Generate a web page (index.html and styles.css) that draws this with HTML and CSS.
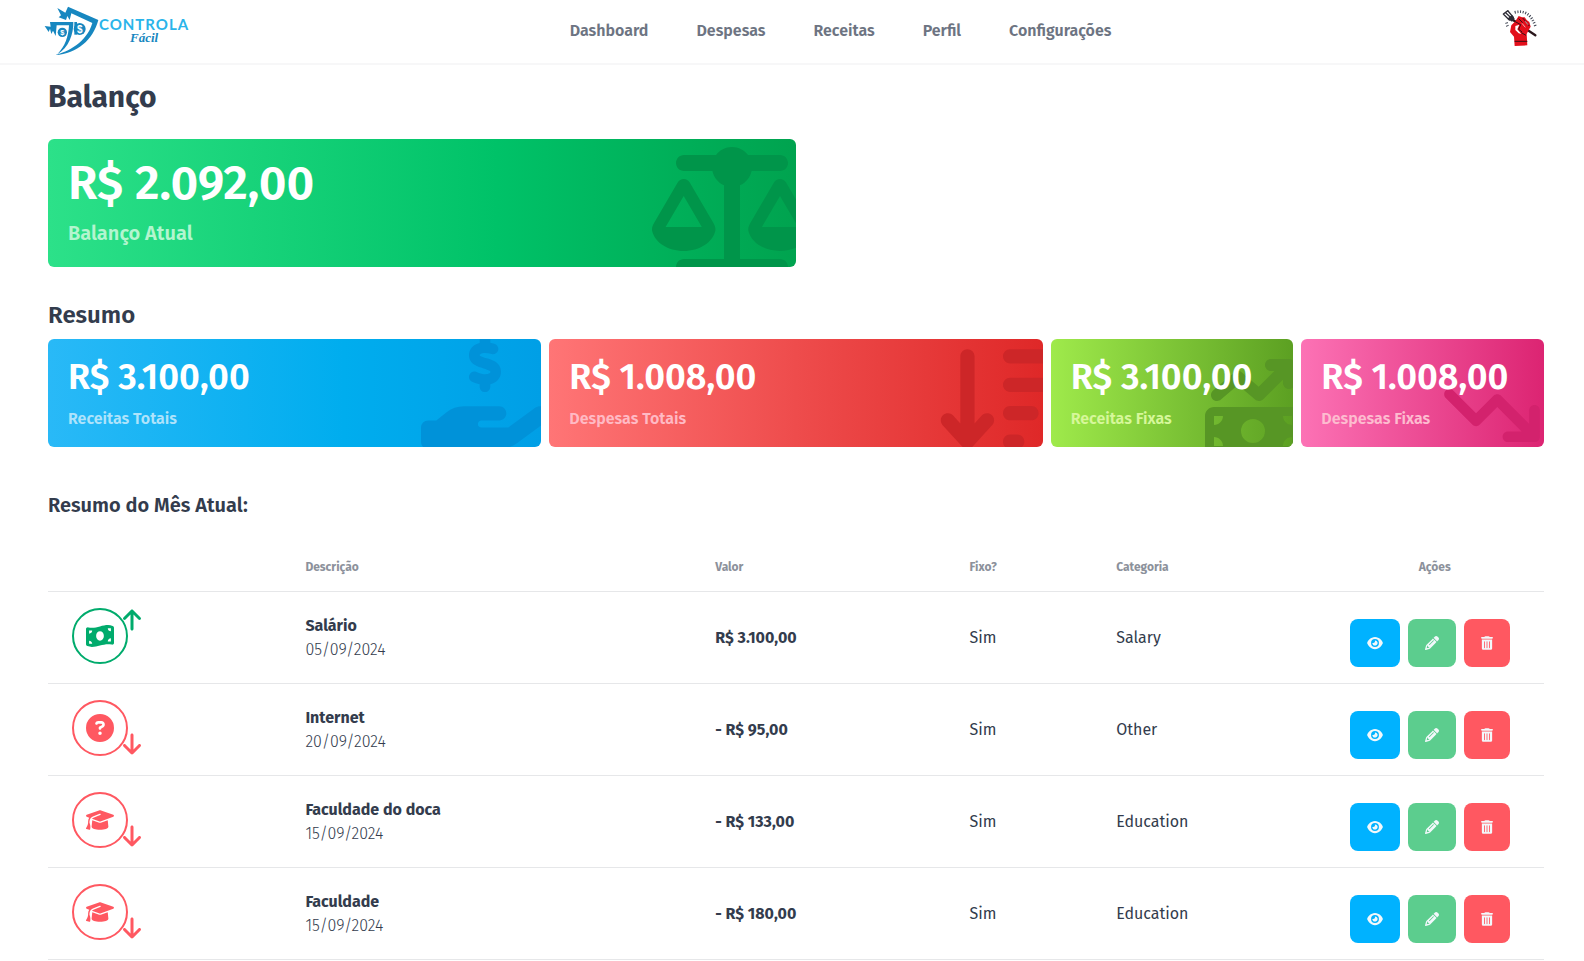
FILE: index.html
```html
<!DOCTYPE html>
<html lang="pt-BR">
<head>
<meta charset="utf-8">
<meta name="viewport" content="width=device-width, initial-scale=1">
<title>Controla Fácil</title>
<link rel="stylesheet" href="styles.css">
</head>
<body>
<svg class="sprite" aria-hidden="true">
  <symbol id="i-bill" viewBox="0 0 576 512"><path d="M0 112.5V422.3c0 18 10.1 35 27 41.3c87 32.5 174 10.3 261-11.9c79.8-20.3 159.6-40.7 239.3-18.9c23 6.3 48.7-9.5 48.7-33.4V89.7c0-18-10.1-35-27-41.3C462 15.9 375 38.1 288 60.3C208.2 80.6 128.4 100.9 48.7 79.1C25.6 72.8 0 88.6 0 112.5zM288 352c-44.2 0-80-43-80-96s35.8-96 80-96s80 43 80 96s-35.8 96-80 96zM64 352c35.3 0 64 28.7 64 64H64V352zm64-208c0 35.3-28.7 64-64 64V144h64zM512 304v64H448c0-35.3 28.7-64 64-64zM448 96h64v64c-35.3 0-64-28.7-64-64z"/></symbol>
  <symbol id="i-question" viewBox="0 0 512 512"><path d="M256 512A256 256 0 1 0 256 0a256 256 0 1 0 0 512zM169.8 165.3c7.9-22.3 29.1-37.3 52.8-37.3h58.3c34.9 0 63.1 28.3 63.1 63.1c0 22.6-12.1 43.5-31.7 54.8L280 264.4c-.2 13-10.9 23.6-24 23.6c-13.3 0-24-10.7-24-24V250.5c0-8.6 4.6-16.5 12.1-20.8l44.3-25.4c4.7-2.7 7.6-7.7 7.6-13.1c0-8.4-6.8-15.1-15.1-15.1H222.6c-3.4 0-6.4 2.1-7.5 5.3l-.4 1.2c-4.4 12.5-18.2 19-30.6 14.6s-19-18.2-14.6-30.6l.4-1.2zM224 352a32 32 0 1 1 64 0 32 32 0 1 1 -64 0z"/></symbol>
  <symbol id="i-cap" viewBox="0 0 640 512"><path d="M320 32c-8.1 0-16.1 1.4-23.7 4.1L15.8 137.4C6.3 140.9 0 149.9 0 160s6.3 19.1 15.8 22.6l57.9 20.9C57.3 229.3 48 259.8 48 291.9v28.1c0 28.4-10.8 57.7-22.3 80.8c-6.5 13-13.9 25.8-22.5 37.6C0 442.7-.9 448.3 .9 453.4s6 8.9 11.2 10.2l64 16c4.2 1.1 8.7 .3 12.4-2s6.3-6.1 7.1-10.4c8.6-42.8 4.3-81.2-2.1-108.7C90.3 344.3 86 329.8 80 316.5V291.9c0-30.2 10.2-58.7 27.9-81.5c12.9-15.5 29.6-28 49.2-35.7l157-61.7c8.2-3.2 17.5 .8 20.7 9s-.8 17.5-9 20.7l-157 61.7c-12.4 4.9-23.3 12.4-32.2 21.6l159.6 57.6c7.6 2.7 15.6 4.1 23.7 4.1s16.1-1.4 23.7-4.1L624.2 182.6c9.5-3.4 15.8-12.5 15.8-22.6s-6.3-19.1-15.8-22.6L343.7 36.1C336.1 33.4 328.1 32 320 32zM128 408c0 35.3 86 72 192 72s192-36.7 192-72L496.7 262.6 354.5 314c-11.1 4-22.8 6-34.5 6s-23.5-2-34.5-6L143.3 262.6 128 408z"/></symbol>
  <symbol id="i-up" viewBox="0 0 384 512"><path d="M214.6 41.4c-12.5-12.5-32.8-12.5-45.3 0l-160 160c-12.5 12.5-12.5 32.8 0 45.3s32.8 12.5 45.3 0L160 141.2V448c0 17.7 14.3 32 32 32s32-14.3 32-32V141.2L329.4 246.6c12.5 12.5 32.8 12.5 45.3 0s12.5-32.8 0-45.3l-160-160z"/></symbol>
  <symbol id="i-down" viewBox="0 0 384 512"><path d="M169.4 470.6c12.5 12.5 32.8 12.5 45.3 0l160-160c12.5-12.5 12.5-32.8 0-45.3s-32.8-12.5-45.3 0L224 370.8V64c0-17.7-14.3-32-32-32s-32 14.3-32 32v306.7L54.6 265.4c-12.5-12.5-32.8-12.5-45.3 0s-12.5 32.8 0 45.3l160 160z"/></symbol>
  <symbol id="i-eye" viewBox="0 0 576 512"><path d="M288 32c-80.8 0-145.5 36.8-192.6 80.6C48.6 156 17.3 208 2.5 243.7c-3.3 7.9-3.3 16.7 0 24.6C17.3 304 48.6 356 95.4 399.4C142.5 443.2 207.2 480 288 480s145.5-36.8 192.6-80.6c46.8-43.5 78.1-95.4 93-131.1c3.3-7.9 3.3-16.7 0-24.6c-14.9-35.7-46.2-87.7-93-131.1C433.5 68.8 368.8 32 288 32zM144 256a144 144 0 1 1 288 0 144 144 0 1 1 -288 0zm144-64c0 35.3-28.7 64-64 64c-7.1 0-13.9-1.2-20.3-3.3c-5.5-1.8-11.9 1.6-11.7 7.4c.3 6.9 1.3 13.8 3.2 20.7c13.7 51.2 66.4 81.6 117.6 67.9s81.6-66.4 67.9-117.6c-11.1-41.5-47.8-69.4-88.6-71.1c-5.8-.2-9.2 6.1-7.4 11.7c2.1 6.4 3.3 13.2 3.3 20.3z"/></symbol>
  <symbol id="i-pencil" viewBox="0 0 512 512"><path d="M410.3 231l11.3-11.3-33.9-33.9-62.1-62.1L291.7 89.8l-11.3 11.3-22.6 22.6L58.6 322.9c-10.4 10.4-18 23.3-22.2 37.4L1 480.7c-2.5 8.4-.2 17.5 6.1 23.7s15.3 8.5 23.7 6.1l120.3-35.4c14.1-4.2 27-11.8 37.4-22.2L387.7 253.7 410.3 231zM160 399.4l-9.1 22.7c-4 3.1-8.5 5.4-13.3 6.9L59.4 452l23-78.1c1.4-4.9 3.8-9.4 6.9-13.3l22.7-9.1v32c0 8.8 7.2 16 16 16h32zM362.7 18.7L348.3 33.2 325.7 55.8 314.3 67.1l33.9 33.9 62.1 62.1 33.9 33.9 11.3-11.3 22.6-22.6 14.5-14.5c25-25 25-65.5 0-90.5L453.3 18.7c-25-25-65.5-25-90.5 0zm-47.4 168l-144 144c-6.2 6.2-16.4 6.2-22.6 0s-6.2-16.4 0-22.6l144-144c6.2-6.2 16.4-6.2 22.6 0s6.2 16.4 0 22.6z"/></symbol>
  <symbol id="i-trash" viewBox="0 0 448 512"><path d="M135.2 17.7C140.6 6.8 151.7 0 163.8 0H284.2c12.1 0 23.2 6.8 28.6 17.7L320 32h96c17.7 0 32 14.3 32 32s-14.3 32-32 32H32C14.3 96 0 81.7 0 64S14.3 32 32 32h96l7.2-14.3zM32 128H416V448c0 35.3-28.7 64-64 64H96c-35.3 0-64-28.7-64-64V128zm96 64c-8.8 0-16 7.2-16 16V432c0 8.8 7.2 16 16 16s16-7.2 16-16V208c0-8.8-7.2-16-16-16zm96 0c-8.8 0-16 7.2-16 16V432c0 8.8 7.2 16 16 16s16-7.2 16-16V208c0-8.8-7.2-16-16-16zm96 0c-8.8 0-16 7.2-16 16V432c0 8.8 7.2 16 16 16s16-7.2 16-16V208c0-8.8-7.2-16-16-16z"/></symbol>
</svg>

<header class="topbar">
  <a class="brand" href="#" aria-label="Controla Fácil">
    <svg class="brand-mark" viewBox="42 18 165 150" aria-hidden="true">
      <path fill="#1787c0" d="M114 20L205 60C190 118 142 162 76 165C112 156 170 128 187 69L124 40L119 60L112 48L108 60L86 52L93 46L82 24L106 38Z"/>
      <path fill="#1787c0" d="M60 66H130C131 102 116 144 82 163C106 138 115 110 117 76H80L77 108L69 92L64 102L60 86L56 96L44 78L62 80Z"/>
      <path fill="#1787c0" d="M133 66H141V104H133Z"/>
      <circle cx="97" cy="97" r="14" fill="#1787c0"/>
      <circle cx="149" cy="87" r="18" fill="#1787c0"/>
      <text x="97" y="105" class="coin coin-s">$</text>
      <text x="149" y="98" class="coin coin-l">$</text>
    </svg>
    <span class="brand-text"><span class="brand-top">CONTROLA</span><span class="brand-sub">Fácil</span></span>
  </a>
  <nav class="menu">
    <a href="#">Dashboard</a>
    <a href="#">Despesas</a>
    <a href="#">Receitas</a>
    <a href="#">Perfil</a>
    <a href="#">Configurações</a>
  </nav>
  <button class="avatar" type="button" aria-label="Conta">
    <svg viewBox="62 26 120 120" aria-hidden="true">
      <path d="M98 60L168 108" stroke="#2a171c" stroke-width="7" stroke-linecap="round"/>
      <path d="M72 44L86 34M74 46L90 62M79 40L98 58M86 35L102 54" stroke="#2d2c36" stroke-width="4" stroke-linecap="round" fill="none"/>
      <path d="M84 58L98 67L106 58L98 46" fill="#2d2c36"/>
      <path fill="#e30f1b" d="M106 140L104 112L92 98L96 78L108 66L118 50L128 54L136 54L142 62L150 68L154 82L148 92L142 104L144 138Z"/>
      <path fill="#fff" d="M108 80L120 76L114 90L126 104L118 102L108 92Z"/>
      <path d="M106 66L124 76L118 90L128 98M118 58L130 70M130 56L142 70M140 68L150 80M106 126H144M126 100L140 108" stroke="#3a1015" stroke-width="3" fill="none"/>
      <path d="M128 72L138 84M138 66L146 76" stroke="#fff" stroke-width="2"/>
      <path d="M106 39Q150 28 168 80" fill="none" stroke="#3d4250" stroke-width="8" stroke-dasharray="3 5"/>
      <path d="M78 72l8-2M80 81l8-3" stroke="#3d4250" stroke-width="3"/>
    </svg>
  </button>
</header>

<main class="page">
  <h1>Balanço</h1>
  <section class="balance">
    <article class="card card-green card-lg">
      <svg class="art art-scale" viewBox="0 0 640 512" aria-hidden="true"><path d="M384 32l128 0c17.7 0 32 14.3 32 32s-14.3 32-32 32L398.4 96c-5.2 25.8-22.9 47.1-46.4 57.3L352 448l160 0c17.7 0 32 14.3 32 32s-14.3 32-32 32l-192 0-192 0c-17.7 0-32-14.3-32-32s14.3-32 32-32l160 0 0-294.7c-23.5-10.3-41.2-31.6-46.4-57.3L128 96c-17.7 0-32-14.3-32-32s14.3-32 32-32l128 0c14.6-19.4 37.8-32 64-32s49.4 12.6 64 32zm55.6 288l144.9 0L512 195.8 439.6 320zM512 416c-62.9 0-115.2-34-126-78.9c-2.6-11 1-22.3 6.7-32.1l95.2-163.2c5-8.6 14.2-13.8 24.1-13.8s19.1 5.3 24.1 13.8l95.2 163.2c5.7 9.8 9.3 21.1 6.7 32.1C627.2 382 574.9 416 512 416zM126.8 195.8L54.4 320l144.9 0L126.8 195.8zM.9 337.1c-2.6-11 1-22.3 6.7-32.1l95.2-163.2c5-8.6 14.2-13.8 24.1-13.8s19.1 5.3 24.1 13.8l95.2 163.2c5.7 9.8 9.3 21.1 6.7 32.1C242 382 189.7 416 126.8 416S11.7 382 .9 337.1z"/></svg>
      <p class="amount">R$ 2.092,00</p>
      <p class="label">Balanço Atual</p>
    </article>
  </section>

  <h2>Resumo</h2>
  <section class="summary">
    <article class="card card-blue wide">
      <svg class="art art-hand" viewBox="0 0 576 512" aria-hidden="true"><path d="M312 24l0 10.5c6.4 1.2 12.6 2.7 18.2 4.2c12.8 3.4 20.4 16.6 17 29.4s-16.6 20.4-29.4 17c-10.9-2.9-21.1-4.9-30.2-5c-7.3-.1-14.7 1.7-19.4 4.4c-2.1 1.3-3.1 2.4-3.5 3c-.3 .5-.7 1.2-.7 2.8c0 .3 0 .5 0 .6c.2 .2 .9 1.2 3.3 2.6c5.8 3.5 14.4 6.2 27.4 10.1l.9 .3c11.1 3.3 25.9 7.8 37.9 15.3c13.7 8.6 26.1 22.9 26.4 44.9c.3 22.5-11.4 38.9-26.7 48.5c-6.7 4.1-13.9 7-21.3 8.8l0 10.6c0 13.3-10.7 24-24 24s-24-10.7-24-24l0-11.4c-9.5-2.3-18.2-5.3-25.6-7.8c-2.1-.7-4.1-1.4-6-2c-12.6-4.2-19.4-17.8-15.2-30.4s17.8-19.4 30.4-15.2c2.6 .9 5 1.7 7.3 2.5c13.6 4.6 23.4 7.9 33.9 8.3c8 .3 15.1-1.6 19.2-4.1c1.9-1.2 2.8-2.2 3.2-2.9c.4-.6 .9-1.8 .8-4.1l0-.2c0-1 0-2.1-4-4.6c-5.7-3.6-14.3-6.4-27.1-10.3l-1.9-.6c-10.8-3.2-25-7.5-36.4-14.4c-13.5-8.1-26.5-22-26.6-44.1c-.1-22.9 12.9-38.6 27.7-47.4c6.4-3.8 13.3-6.4 20.2-8.2L264 24c0-13.3 10.7-24 24-24s24 10.7 24 24zM568.2 336.3c13.1 17.8 9.3 42.8-8.5 55.9L433.1 485.5c-23.4 17.2-51.6 26.5-80.7 26.5L192 512 32 512c-17.7 0-32-14.3-32-32l0-64c0-17.7 14.3-32 32-32l36.8 0 44.9-36c22.7-18.2 50.9-28 80-28l78.3 0 16 0 64 0c17.7 0 32 14.3 32 32s-14.3 32-32 32l-64 0-16 0c-8.8 0-16 7.2-16 16s7.2 16 16 16l120.6 0 119.7-88.2c17.8-13.1 42.8-9.3 55.9 8.5z"/></svg>
      <p class="amount">R$ 3.100,00</p>
      <p class="label">Receitas Totais</p>
    </article>
    <article class="card card-red wide">
      <svg class="art art-sort" viewBox="0 0 576 512" aria-hidden="true"><path d="M151.6 469.6C145.5 476.2 137 480 128 480s-17.5-3.8-23.6-10.4l-88-96c-11.9-13-11.1-33.3 2-45.2s33.3-11.1 45.2 2L96 365.7 96 64c0-17.7 14.3-32 32-32s32 14.3 32 32l0 301.7 32.4-35.4c11.9-13 32.2-13.9 45.2-2s13.9 32.2 2 45.2l-88 96zM320 480c-17.7 0-32-14.3-32-32s14.3-32 32-32l32 0c17.7 0 32 14.3 32 32s-14.3 32-32 32l-32 0zm0-128c-17.7 0-32-14.3-32-32s14.3-32 32-32l96 0c17.7 0 32 14.3 32 32s-14.3 32-32 32l-96 0zm0-128c-17.7 0-32-14.3-32-32s14.3-32 32-32l160 0c17.7 0 32 14.3 32 32s-14.3 32-32 32l-160 0zm0-128c-17.7 0-32-14.3-32-32s14.3-32 32-32L544 32c17.7 0 32 14.3 32 32s-14.3 32-32 32L320 96z"/></svg>
      <p class="amount">R$ 1.008,00</p>
      <p class="label">Despesas Totais</p>
    </article>
    <article class="card card-lime">
      <svg class="art art-trend" viewBox="0 0 512 512" aria-hidden="true"><path d="M470.7 9.4c3 3.1 5.3 6.6 6.9 10.3s2.4 7.8 2.4 12.2c0 0 0 .1 0 .1v96c0 17.7-14.3 32-32 32s-32-14.3-32-32V109.3L310.6 214.6c-11.8 11.8-30.8 12.6-43.5 1.7L176 138.1 84.8 216.3c-13.4 11.5-33.6 9.9-45.1-3.5s-9.9-33.6 3.5-45.1l112-96c12-10.3 29.7-10.3 41.7 0l89.5 76.7L370.7 64H352c-17.7 0-32-14.3-32-32s14.3-32 32-32h96 0c8.8 0 16.8 3.6 22.6 9.3l.1 .1zM0 304c0-26.5 21.5-48 48-48H464c26.5 0 48 21.5 48 48V464c0 26.5-21.5 48-48 48H48c-26.5 0-48-21.5-48-48V304zM48 416v48H96c0-26.5-21.5-48-48-48zM96 304H48v48c26.5 0 48-21.5 48-48zM464 416c-26.5 0-48 21.5-48 48h48V416zM416 304c0 26.5 21.5 48 48 48V304H416zm-96 80a64 64 0 1 0 -128 0 64 64 0 1 0 128 0z"/></svg>
      <p class="amount">R$ 3.100,00</p>
      <p class="label">Receitas Fixas</p>
    </article>
    <article class="card card-pink">
      <svg class="art art-fall" viewBox="0 0 576 512" aria-hidden="true"><path d="M384 352c-17.7 0-32 14.3-32 32s14.3 32 32 32H544c17.7 0 32-14.3 32-32V224c0-17.7-14.3-32-32-32s-32 14.3-32 32v82.7L342.6 137.4c-12.5-12.5-32.8-12.5-45.3 0L192 242.7 54.6 105.4c-12.5-12.5-32.8-12.5-45.3 0s-12.5 32.8 0 45.3l160 160c12.5 12.5 32.8 12.5 45.3 0L320 205.3 466.7 352H384z"/></svg>
      <p class="amount">R$ 1.008,00</p>
      <p class="label">Despesas Fixas</p>
    </article>
  </section>

  <h3>Resumo do Mês Atual:</h3>
  <table class="entries">
    <thead>
      <tr><th class="c-icon"></th><th class="c-desc">Descrição</th><th class="c-value">Valor</th><th class="c-fixed">Fixo?</th><th class="c-cat">Categoria</th><th class="c-act">Ações</th></tr>
    </thead>
    <tbody>
      <tr>
        <td><div class="kind income"><span class="ring"><svg><use href="#i-bill"/></svg></span><svg class="arrow"><use href="#i-up"/></svg></div></td>
        <td><div class="name">Salário</div><div class="date">05/09/2024</div></td>
        <td class="value">R$ 3.100,00</td><td>Sim</td><td>Salary</td>
        <td class="act"><div class="actions"><button class="btn view" type="button" aria-label="Ver"><svg><use href="#i-eye"/></svg></button><button class="btn edit" type="button" aria-label="Editar"><svg><use href="#i-pencil"/></svg></button><button class="btn del" type="button" aria-label="Excluir"><svg><use href="#i-trash"/></svg></button></div></td>
      </tr>
      <tr>
        <td><div class="kind expense"><span class="ring"><svg><use href="#i-question"/></svg></span><svg class="arrow"><use href="#i-down"/></svg></div></td>
        <td><div class="name">Internet</div><div class="date">20/09/2024</div></td>
        <td class="value">- R$ 95,00</td><td>Sim</td><td>Other</td>
        <td class="act"><div class="actions"><button class="btn view" type="button" aria-label="Ver"><svg><use href="#i-eye"/></svg></button><button class="btn edit" type="button" aria-label="Editar"><svg><use href="#i-pencil"/></svg></button><button class="btn del" type="button" aria-label="Excluir"><svg><use href="#i-trash"/></svg></button></div></td>
      </tr>
      <tr>
        <td><div class="kind expense"><span class="ring"><svg><use href="#i-cap"/></svg></span><svg class="arrow"><use href="#i-down"/></svg></div></td>
        <td><div class="name">Faculdade do doca</div><div class="date">15/09/2024</div></td>
        <td class="value">- R$ 133,00</td><td>Sim</td><td>Education</td>
        <td class="act"><div class="actions"><button class="btn view" type="button" aria-label="Ver"><svg><use href="#i-eye"/></svg></button><button class="btn edit" type="button" aria-label="Editar"><svg><use href="#i-pencil"/></svg></button><button class="btn del" type="button" aria-label="Excluir"><svg><use href="#i-trash"/></svg></button></div></td>
      </tr>
      <tr>
        <td><div class="kind expense"><span class="ring"><svg><use href="#i-cap"/></svg></span><svg class="arrow"><use href="#i-down"/></svg></div></td>
        <td><div class="name">Faculdade</div><div class="date">15/09/2024</div></td>
        <td class="value">- R$ 180,00</td><td>Sim</td><td>Education</td>
        <td class="act"><div class="actions"><button class="btn view" type="button" aria-label="Ver"><svg><use href="#i-eye"/></svg></button><button class="btn edit" type="button" aria-label="Editar"><svg><use href="#i-pencil"/></svg></button><button class="btn del" type="button" aria-label="Excluir"><svg><use href="#i-trash"/></svg></button></div></td>
      </tr>
    </tbody>
  </table>
</main>
</body>
</html>
```
FILE: styles.css
```css
* { box-sizing: border-box; }
body {
  margin: 0;
  background: #fff;
  color: #333c4d;
  font: 16px/24px "Fira Sans", Roboto, sans-serif;
}
h1, h2, h3, p { margin: 0; }
svg { display: block; fill: currentColor; }
.sprite { position: absolute; width: 0; height: 0; }

.topbar {
  display: flex;
  align-items: center;
  justify-content: space-between;
  height: 65px;
  padding: 0 40px 0 44px;
  border-bottom: 2px solid #f7f7f8;
}
.brand { display: flex; align-items: center; padding-bottom: 2px; text-decoration: none; }
.brand-mark { width: 55px; height: 50px; }
.brand-text { display: flex; flex-direction: column; align-items: center; }
.brand-top { font: 700 15px/14px Lato, sans-serif; letter-spacing: 1px; color: #2ab4ea; }
.brand-sub { font: italic 700 13px/13px "Liberation Serif", serif; color: #1787c0; }
.coin { font-family: "Liberation Sans", sans-serif; font-weight: 700; fill: #fff; text-anchor: middle; }
.coin-s { font-size: 22px; }
.coin-l { font-size: 30px; }
.menu { display: flex; gap: 48px; padding: 0 4px 2px 0; }
.menu a { color: #6d7482; font-weight: 600; text-decoration: none; }
.avatar {
  display: grid;
  place-items: center;
  width: 48px;
  height: 40px;
  margin-bottom: 7px;
  padding: 0;
  border: 0;
  background: none;
}
.avatar svg { width: 40px; height: 40px; }

.page { padding: 16px 40px 0 48px; }
h1 { font-size: 30px; line-height: 32px; font-weight: 700; margin-bottom: 26px; }
h2 { font-size: 24px; line-height: 32px; font-weight: 600; margin: 32px 0 8px; }
h3 { font-size: 20px; line-height: 28px; font-weight: 600; margin: 44px 0 24px; }
.balance { display: grid; grid-template-columns: 1fr 1fr; }
.summary { display: grid; grid-template-columns: repeat(6, 1fr); gap: 8px; }
.wide { grid-column: span 2; }

.card {
  position: relative;
  overflow: hidden;
  padding: 20px 20px 16px;
  border-radius: 6px;
  font-weight: 600;
}
.card-lg { padding-bottom: 20px; }
.amount { position: relative; color: #fff; font-size: 36px; line-height: 36px; white-space: nowrap; }
.label { position: relative; margin-top: 12px; }
.card-lg .amount { font-size: 48px; line-height: 48px; }
.card-lg .label { font-size: 20px; line-height: 28px; }
.card-green { background: linear-gradient(90deg, #2ce189, #00c268 60%, #00a34f); color: #b3f5cf; }
.card-blue { background: linear-gradient(90deg, #29b9f7, #00adee 60%, #009fe6); color: #aee3fb; }
.card-red { background: linear-gradient(90deg, #ff7576, #ee4c4c 50%, #df2828); color: #ffbac4; }
.card-lime { background: linear-gradient(90deg, #9fea4b, #5ca022); color: #d6f79a; }
.card-pink { background: linear-gradient(90deg, #fc72b5, #dc2472); color: #fdbccf; }
.art { position: absolute; }
.art-scale { width: 160px; height: 128px; top: 8px; right: -16px; color: #00954a; }
.art-hand { width: 128px; height: 114px; top: -4px; right: -8px; color: #0092d9; }
.art-sort { width: 128px; height: 114px; top: 3px; right: -24px; color: #cd2628; }
.art-trend { width: 96px; height: 96px; top: 20px; right: -8px; color: #579625; }
.art-fall { width: 96px; height: 85px; top: 34px; right: 4px; color: #d3226d; }

.entries { width: 100%; table-layout: fixed; border-collapse: separate; border-spacing: 0; }
.entries th, .entries td { text-align: left; border-bottom: 1px solid #e6e7e9; }
.entries th { padding: 16px 24px; font-size: 12px; line-height: 16px; font-weight: 700; color: #8c919b; }
.entries td { padding: 16px 24px; vertical-align: middle; }
.entries .c-icon { width: 15.6%; }
.entries .c-desc { width: 27.4%; }
.entries .c-value { width: 17%; }
.entries .c-fixed { width: 9.8%; }
.entries .c-cat { width: 15.6%; }
.entries .c-act { width: 14.6%; text-align: center; }
.entries td:first-child { vertical-align: top; }
.entries td.act { padding: 27px 24px 16px; }
.name, .value { font-weight: 700; }
.date { font-weight: 300; }

.kind { display: flex; }
.income { color: #00ab6c; }
.expense { color: #ff5861; align-items: flex-end; }
.ring {
  display: grid;
  place-items: center;
  width: 56px;
  height: 56px;
  border: 2px solid;
  border-radius: 50%;
}
.ring svg { width: 28px; height: 28px; }
.arrow { width: 18px; height: 24px; margin-left: -5px; }

.actions { display: flex; gap: 8px; }
.btn {
  display: grid;
  place-items: center;
  height: 48px;
  padding: 0 16px;
  border: 1px solid transparent;
  border-radius: 8px;
  color: #f2f8fb;
}
.btn svg { height: 14px; }
.view { background: #00b2ff; }
.edit { background: #5ccd8e; }
.del { background: #ff5861; }
.view svg { width: 16px; }
.edit svg { width: 14px; }
.del svg { width: 12px; }
```
